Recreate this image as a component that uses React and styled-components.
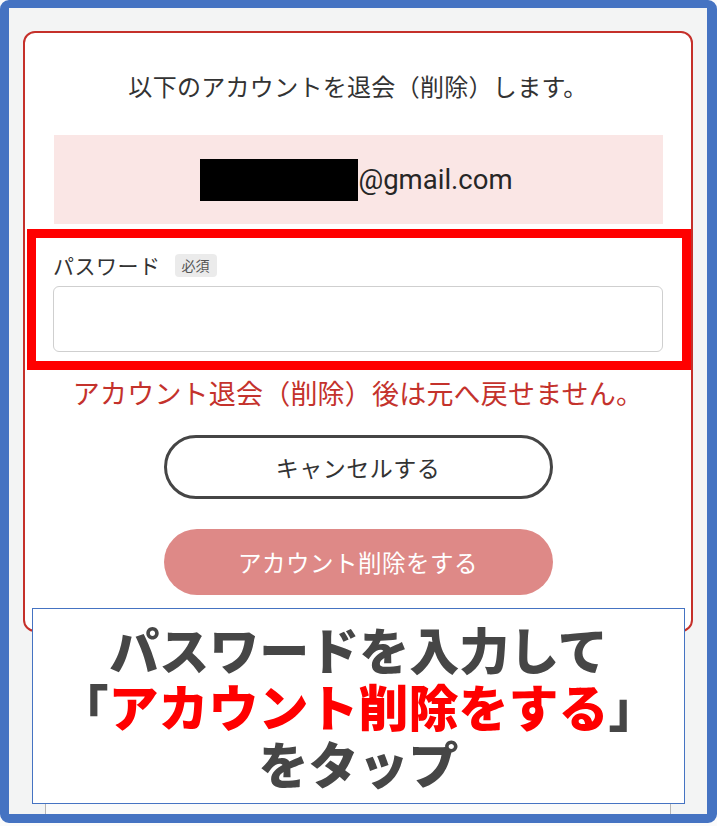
import React from "react";
import styled, { createGlobalStyle } from "styled-components";

const GlobalStyle = createGlobalStyle`
  html, body {
    margin: 0;
    padding: 0;
    background: #fbfbfb;
  }
  body {
    font-family: "Noto Sans CJK JP", "Noto Sans", sans-serif;
  }
`;

const App = () => {
  return (
    <>
      <GlobalStyle />
      <Frame>
        <Card>
          <Title>以下のアカウントを退会（削除）します。</Title>
          <EmailBox>
            <Redacted />
            <Email>@gmail.com</Email>
          </EmailBox>
          <Highlight>
            <LabelRow>
              <Label>パスワード</Label>
              <Badge>必須</Badge>
            </LabelRow>
            <Input type="password" />
          </Highlight>
          <Warning>アカウント退会（削除）後は元へ戻せません。</Warning>
          <Buttons>
            <PillButton>キャンセルする</PillButton>
            <PillButton $danger>アカウント削除をする</PillButton>
          </Buttons>
        </Card>
        <NextCard />
        <Callout>
          <CalloutLine>パスワードを入力して</CalloutLine>
          <CalloutLine>
            「<Red>アカウント削除をする</Red>」
          </CalloutLine>
          <CalloutLine>をタップ</CalloutLine>
        </Callout>
      </Frame>
    </>
  );
};

const Frame = styled.div`
  position: relative;
  box-sizing: border-box;
  width: 717px;
  height: 823px;
  overflow: hidden;
  background: #f3f4f4;
  border-style: solid;
  border-color: #4573c2;
  border-width: 8px 10px 9px 9px;
  border-radius: 9px;
  padding: 23px 14px 0 14px;
`;

const Card = styled.div`
  box-sizing: border-box;
  background: #ffffff;
  border: 2.5px solid #c5302a;
  border-radius: 12px;
  height: 601px;
  padding-top: 36px;
  display: flex;
  flex-direction: column;
`;

const Title = styled.p`
  margin: 0;
  text-align: center;
  font-size: 24px;
  line-height: 34px;
  color: #333;
  letter-spacing: 0.3px;
`;

const EmailBox = styled.div`
  margin: 32px 28px 0 29px;
  height: 89px;
  background: #fae6e5;
  display: flex;
  align-items: center;
  justify-content: center;
  padding-right: 4px;
`;

const Redacted = styled.span`
  display: inline-block;
  width: 158px;
  height: 42px;
  background: #000;
`;

const Email = styled.span`
  font-family: Roboto, "Liberation Sans", sans-serif;
  font-size: 27.5px;
  color: #262626;
`;

const Highlight = styled.div`
  margin: 5px 0 0 2px;
  border: 9px solid #ff0000;
  padding: 0 19px 9px 17px;
  background: #ffffff;
`;

const LabelRow = styled.div`
  display: flex;
  align-items: center;
  gap: 14px;
  margin-top: 14px;
  height: 26px;
`;

const Label = styled.span`
  font-size: 21px;
  color: #333;
  letter-spacing: 0.5px;
`;

const Badge = styled.span`
  font-size: 14px;
  color: #555;
  background: #ebebeb;
  border-radius: 4px;
  padding: 2px 7px;
  line-height: 19px;
`;

const Input = styled.input`
  box-sizing: border-box;
  display: block;
  width: 100%;
  height: 66px;
  margin-top: 8px;
  border: 1px solid #cfcfcf;
  border-radius: 6px;
  background: #fff;
  outline: none;
`;

const Warning = styled.p`
  margin: 5px 0 0;
  text-align: center;
  font-size: 27px;
  line-height: 36px;
  color: #c4322c;
  letter-spacing: 0.2px;
`;

const Buttons = styled.div`
  display: flex;
  flex-direction: column;
  align-items: center;
  gap: 30px;
  margin-top: 24px;
`;

const PillButton = styled.button`
  box-sizing: border-box;
  width: 389px;
  height: ${(p) => (p.$danger ? "66px" : "64px")};
  border-radius: 34px;
  font-family: "Noto Sans CJK JP", sans-serif;
  font-size: ${(p) => (p.$danger ? "23.5px" : "23px")};
  letter-spacing: 0.5px;
  cursor: pointer;
  border: ${(p) => (p.$danger ? "none" : "3px solid #454545")};
  background: ${(p) => (p.$danger ? "#de8987" : "#ffffff")};
  color: ${(p) => (p.$danger ? "#ffffff" : "#333333")};
`;

const NextCard = styled.div`
  margin: 10px 22px 0 22px;
  height: 200px;
  background: #fafafa;
  border-left: 1px solid #b5b5b5;
  border-right: 1px solid #b5b5b5;
`;

const Callout = styled.div`
  position: absolute;
  left: 23px;
  top: 600px;
  box-sizing: border-box;
  width: 653px;
  height: 196px;
  background: #ffffff;
  border: 1.5px solid #4573c2;
  padding-top: 11px;
  text-align: center;
`;

const CalloutLine = styled.div`
  font-family: "Noto Sans CJK JP", sans-serif;
  font-weight: 900;
  font-size: 50px;
  line-height: 57px;
  color: #464646;
  white-space: nowrap;
`;

const Red = styled.span`
  color: #ff0000;
`;

export default App;
